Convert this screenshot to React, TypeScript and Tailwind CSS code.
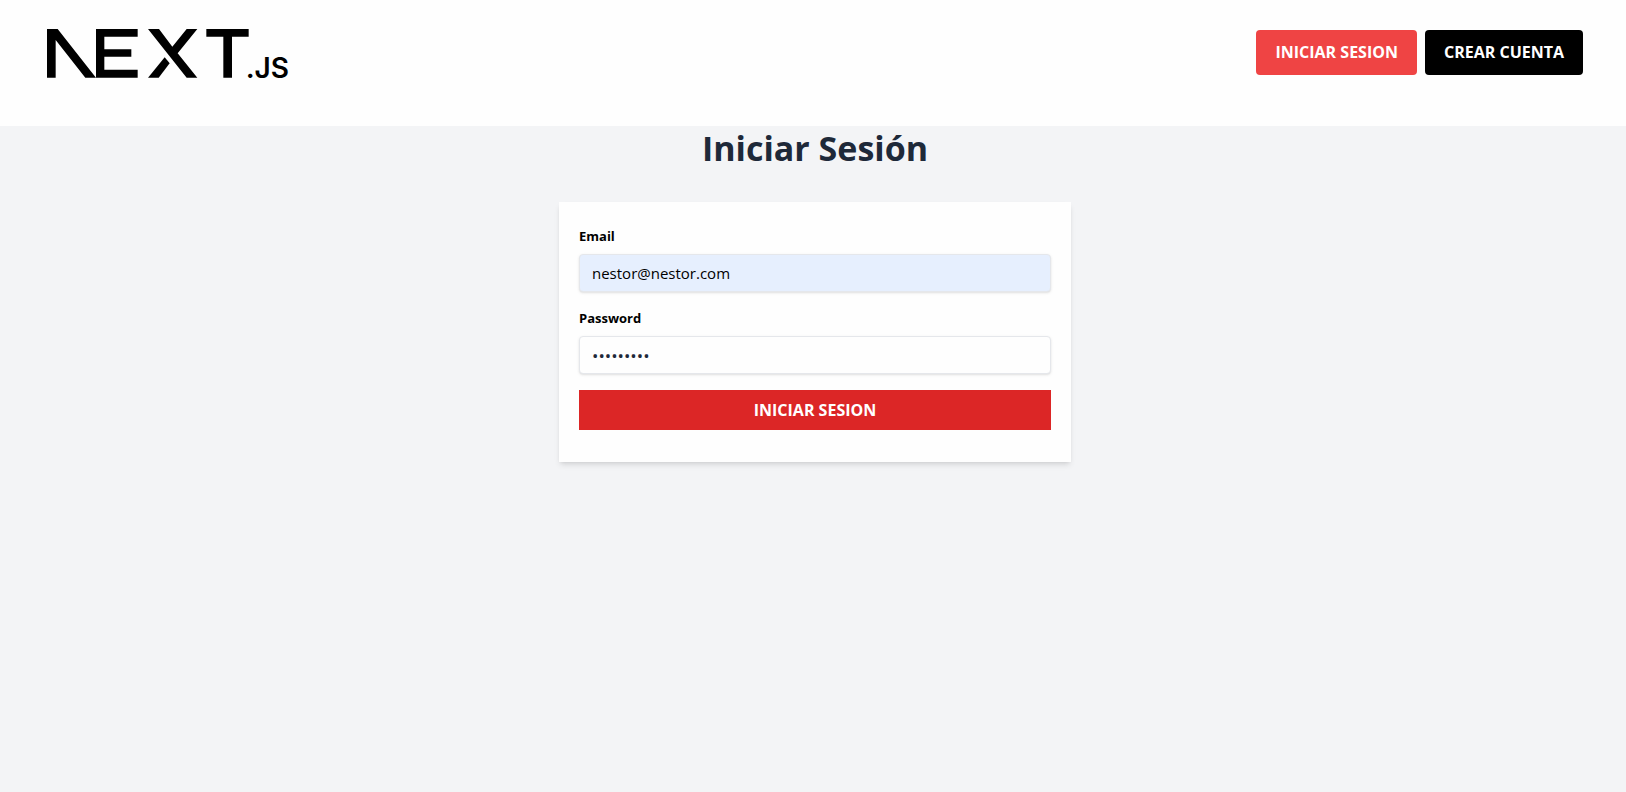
import { useState } from "react";
import type { FormEvent } from "react";

function Logo() {
  return (
    <svg className="h-[62px] w-[248px] shrink-0" viewBox="0 -3 744 186" role="img" aria-label="NEXT.JS">
      <g fill="#000">
        <path d="M0 0H32L147 146H115L26 33V146H0Z" />
        <path d="M147 0H272V23H172V61H253V83H172V122H272V146H147Z" />
        <path d="M303 0H336L376 53L419 0H451L392 73L451 146H419Z" />
        <path d="M353 85L368 103L335 146H303Z" />
        <path d="M478 0H605V23H555V146H529V23H478Z" />
      </g>
      <text x="596" y="146" fontSize="84" fontWeight="600" fontFamily="Inter, sans-serif">
        .JS
      </text>
    </svg>
  );
}

const label = "mb-2 block text-[13px] leading-5 font-bold text-black";
const field =
  "block h-[38px] w-full rounded-[4px] border border-gray-200 px-3 py-2 leading-5 shadow-sm outline-none";

export default function App() {
  const [email, setEmail] = useState("nestor@nestor.com");
  const [password, setPassword] = useState("password1");

  const submit = (event: FormEvent) => event.preventDefault();

  return (
    <div className="min-h-screen bg-gray-100 font-['Segoe_UI','Open_Sans',sans-serif]">
      <header className="bg-[#fefefe] pt-7 pb-9 pl-1">
        <div className="mx-auto flex max-w-[1536px] items-start justify-between">
          <a href="#" className="block">
            <Logo />
          </a>
          <nav className="flex gap-2 pt-0.5 text-base leading-[21px] font-bold text-white uppercase">
            <a href="#login" className="rounded-[4px] bg-[#ef4444] px-[19px] py-3">
              Iniciar Sesion
            </a>
            <a href="#signup" className="rounded-[4px] bg-black px-[19px] py-3">
              Crear Cuenta
            </a>
          </nav>
        </div>
      </header>

      <main className="pl-1">
        <h1 className="text-center text-[34px] leading-[44px] font-bold text-gray-800">Iniciar Sesión</h1>
        <form
          onSubmit={submit}
          className="mx-auto mt-8 max-w-lg bg-[#fefefe] px-5 pt-6 pb-8 shadow-md"
        >
          <label htmlFor="email" className={label}>
            Email
          </label>
          <input
            id="email"
            type="email"
            value={email}
            onChange={(event) => setEmail(event.target.value)}
            className={`${field} bg-[#e6effe] text-[15px] text-black`}
          />
          <label htmlFor="password" className={`${label} mt-4`}>
            Password
          </label>
          <input
            id="password"
            type="password"
            value={password}
            onChange={(event) => setPassword(event.target.value)}
            className={`${field} bg-[#fefefe] text-[17px] text-gray-800`}
          />
          <button
            type="submit"
            className="mt-4 block w-full bg-[#dc2626] py-2 text-base leading-6 font-bold text-white uppercase"
          >
            Iniciar Sesion
          </button>
        </form>
      </main>
    </div>
  );
}
